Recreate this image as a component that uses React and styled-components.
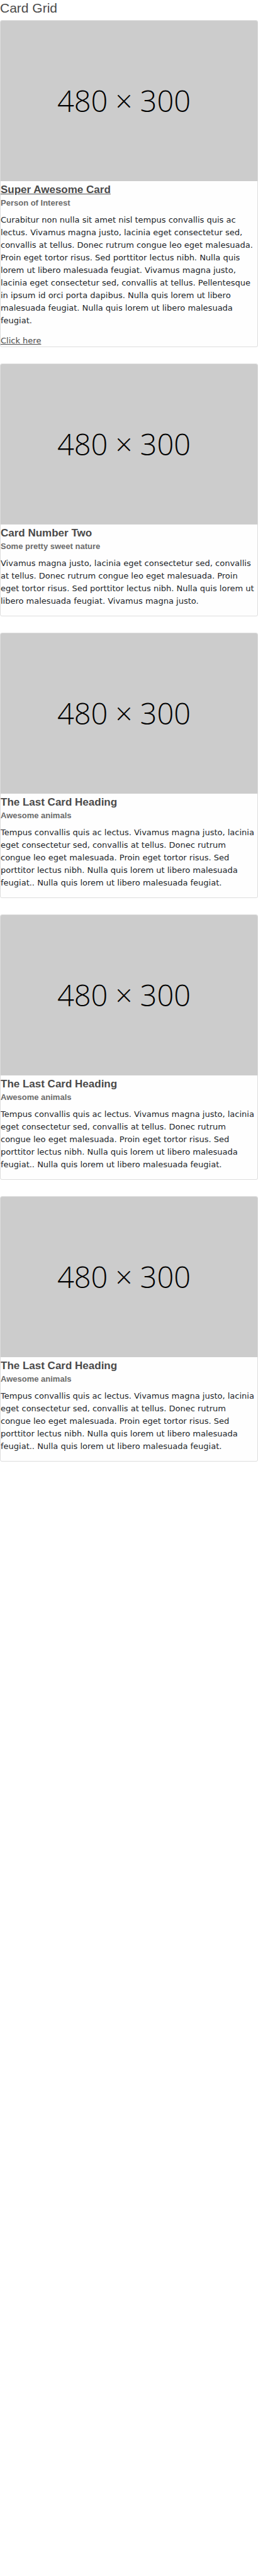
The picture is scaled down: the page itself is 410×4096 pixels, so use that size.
import React from "react";
import styled, { createGlobalStyle } from "styled-components";

const GlobalStyle = createGlobalStyle`
  *, *::before, *::after {
    box-sizing: border-box;
  }
  body {
    margin: 0;
    background: #fff;
    color: #212529;
    font-family: "DejaVu Sans", sans-serif;
    font-size: 13px;
    line-height: 20px;
  }
`;

const PageTitle = styled.h1`
  margin: 0 0 6px;
  color: #4a4a4a;
  font-family: "Liberation Sans", Arial, sans-serif;
  font-size: 21px;
  font-weight: 400;
  line-height: 26px;
`;

const Grid = styled.div`
  display: grid;
  grid-template-columns: 1fr;
  gap: 26px;
`;

const CardBox = styled.article`
  overflow: hidden;
  border: 1px solid #ddd;
  border-radius: 3px;
  background: #fefefe;
`;

const Placeholder = styled.div`
  display: flex;
  align-items: center;
  justify-content: center;
  aspect-ratio: 480 / 300;
  padding: 0 16px 1px 0;
  background: #ccc;
  color: #000;
  font-family: "Open Sans", sans-serif;
  font-size: 47px;
  font-weight: 300;
  line-height: 64px;
`;

const CardHeader = styled.header`
  padding: 3px 0 7px;
  font-family: "Liberation Sans", Arial, sans-serif;
`;

const Heading = styled.h2`
  margin: 0;
  color: #4a4a4a;
  font-size: 17px;
  font-weight: 700;
  line-height: 22px;
`;

const Subheading = styled.h3`
  margin: 0;
  color: #6b6b6b;
  font-size: 13px;
  font-weight: 700;
  line-height: 20px;
`;

const Text = styled.p`
  margin: 0 0 13px;
`;

const HeadingLink = styled.a`
  color: inherit;
  text-decoration: underline;
`;

const MoreLink = styled.a`
  display: block;
  width: fit-content;
  color: #4a4a4a;
  line-height: 18px;
  text-decoration: underline;
`;

const lastCard = {
  heading: "The Last Card Heading",
  subheading: "Awesome animals",
  text: "Tempus convallis quis ac lectus. Vivamus magna justo, lacinia eget consectetur sed, convallis at tellus. Donec rutrum congue leo eget malesuada. Proin eget tortor risus. Sed porttitor lectus nibh. Nulla quis lorem ut libero malesuada feugiat.. Nulla quis lorem ut libero malesuada feugiat.",
};

const cards = [
  {
    heading: "Super Awesome Card",
    subheading: "Person of Interest",
    text: "Curabitur non nulla sit amet nisl tempus convallis quis ac lectus. Vivamus magna justo, lacinia eget consectetur sed, convallis at tellus. Donec rutrum congue leo eget malesuada. Proin eget tortor risus. Sed porttitor lectus nibh. Nulla quis lorem ut libero malesuada feugiat. Vivamus magna justo, lacinia eget consectetur sed, convallis at tellus. Pellentesque in ipsum id orci porta dapibus. Nulla quis lorem ut libero malesuada feugiat. Nulla quis lorem ut libero malesuada feugiat.",
    href: "#card",
  },
  {
    heading: "Card Number Two",
    subheading: "Some pretty sweet nature",
    text: "Vivamus magna justo, lacinia eget consectetur sed, convallis at tellus. Donec rutrum congue leo eget malesuada. Proin eget tortor risus. Sed porttitor lectus nibh. Nulla quis lorem ut libero malesuada feugiat. Vivamus magna justo.",
  },
  lastCard,
  lastCard,
  lastCard,
];

function Card({ heading, subheading, text, href }) {
  return (
    <CardBox>
      <Placeholder>480 × 300</Placeholder>
      <CardHeader>
        <Heading>
          {href ? <HeadingLink href={href}>{heading}</HeadingLink> : heading}
        </Heading>
        <Subheading>{subheading}</Subheading>
      </CardHeader>
      <Text>{text}</Text>
      {href && <MoreLink href={href}>Click here</MoreLink>}
    </CardBox>
  );
}

export default function App() {
  return (
    <main>
      <GlobalStyle />
      <PageTitle>Card Grid</PageTitle>
      <Grid>
        {cards.map((card, index) => (
          <Card key={index} {...card} />
        ))}
      </Grid>
    </main>
  );
}
